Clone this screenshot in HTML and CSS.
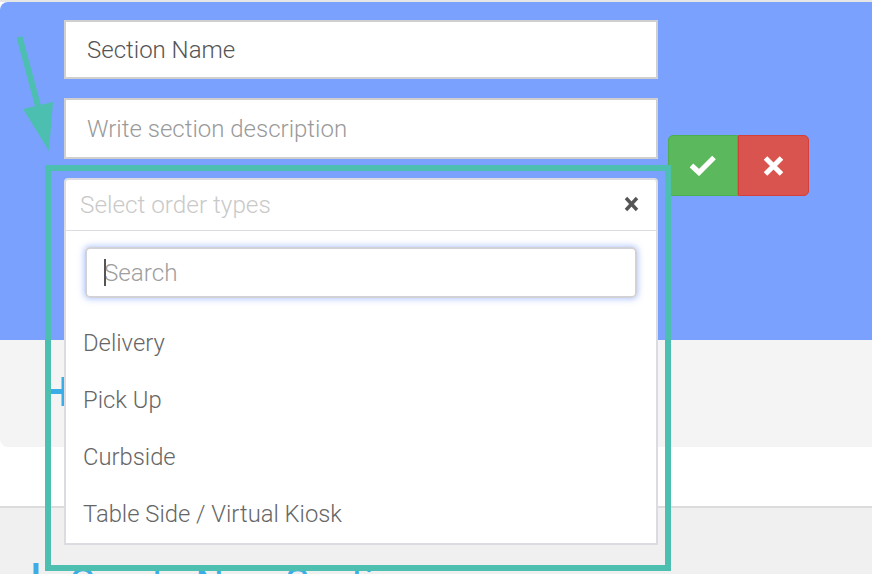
FILE: index.html
```html
<!DOCTYPE html>
<html lang="en">
<head>
<meta charset="utf-8">
<title>Section editor</title>
<link rel="stylesheet" href="styles.css">
</head>
<body>
  <div class="panel">
    <div class="card">
      <div class="card-head">
        <div class="form-col">
          <input class="field field-name" type="text" value="Section Name">
          <input class="field field-desc" type="text" placeholder="Write section description">
          <div class="select">
            <div class="select-head">
              <span class="select-ph">Select order types</span>
              <svg class="select-clear" width="15" height="16" viewBox="0 0 15 16"><path d="M2 2 L13 14 M13 2 L2 14" stroke="#555" stroke-width="3.4" fill="none"/></svg>
            </div>
            <div class="dropdown">
              <div class="search"><span class="caret"></span><span class="search-ph">Search</span></div>
              <ul class="options">
                <li class="option">Delivery</li>
                <li class="option">Pick Up</li>
                <li class="option">Curbside</li>
                <li class="option">Table Side / Virtual Kiosk</li>
              </ul>
            </div>
          </div>
        </div>
        <div class="actions">
          <button class="btn btn-ok" type="button">
            <svg width="26" height="21" viewBox="0 0 26 21"><polyline points="1.5,10.5 9,17.5 24,2.5" stroke="#fff" stroke-width="5.2" fill="none" stroke-linejoin="miter"/></svg>
          </button>
          <button class="btn btn-cancel" type="button">
            <svg width="21" height="20" viewBox="0 0 21 20"><path d="M2.5 2 L18.5 18 M18.5 2 L2.5 18" stroke="#fff" stroke-width="5" fill="none"/></svg>
          </button>
        </div>
      </div>
      <div class="card-body">
        <svg class="plus-small" width="28" height="29" viewBox="0 0 28 29"><path d="M14 0 V29 M0 14.5 H28" stroke="#3aace6" stroke-width="5" fill="none"/></svg>
      </div>
    </div>
  </div>
  <div class="create">
    <svg class="plus-big" width="28" height="28" viewBox="0 0 28 28"><path d="M14 0 V28 M0 14 H28" stroke="#3aace6" stroke-width="5" fill="none"/></svg>
    <span class="create-text">Create New Section</span>
  </div>

  <div class="annot-box"></div>
  <svg class="annot-arrow" width="60" height="160" viewBox="0 0 60 160">
    <line x1="19.5" y1="37" x2="38" y2="106" stroke="#4dbfb0" stroke-width="6"/>
    <polygon points="23,109 53,102 49,151" fill="#4dbfb0"/>
  </svg>
</body>
</html>
```
FILE: styles.css
```css
* { box-sizing: border-box; }
html, body { margin: 0; padding: 0; }
body {
  background: #f0f0f0;
  font-family: Roboto, "Liberation Sans", Arial, sans-serif;
  font-weight: 300;
  width: 872px;
  height: 574px;
  overflow: hidden;
  position: relative;
}
.panel {
  background: #fff;
  border-top: 2px solid #e6e6e6;
  padding-bottom: 59px;
  box-shadow: 0 2px 0 #dcdcdc;
}
.card {
  border-radius: 8px 0 0 8px;
  overflow: visible;
}
.card-head {
  background: #7ba1fe;
  border-top-left-radius: 8px;
  height: 338px;
  padding: 18px 0 0 64px;
  display: flex;
  align-items: flex-start;
}
.form-col {
  width: 594px;
  display: flex;
  flex-direction: column;
}
.field {
  display: block;
  width: 100%;
  margin: 0;
  border: 2px solid #cfcfcf;
  border-radius: 0;
  background: #fff;
  padding: 0 0 0 21px;
  font-family: inherit;
  font-weight: 300;
  font-size: 24px;
  color: #555;
  outline: none;
}
.field-name { height: 59px; }
.field-desc { height: 61px; margin-top: 19px; }
.field::placeholder { color: #9a9a9a; opacity: 1; }

.select {
  position: relative;
  margin-top: 19px;
}
.select-head {
  height: 53px;
  background: #fff;
  border: 2px solid #dcdce0;
  border-bottom-width: 1px;
  border-radius: 4px 4px 0 0;
  display: flex;
  align-items: center;
  justify-content: space-between;
  padding: 0 17px 0 14px;
}
.select-ph {
  font-size: 24.3px;
  line-height: 47px;
  color: #c9c9c9;
  margin-top: -2px;
}
.select-clear { display: block; margin-top: -2px; }

.dropdown {
  position: absolute;
  z-index: 2;
  top: 100%;
  left: 0;
  right: 0;
  background: #fff;
  border: 2px solid #dcdce0;
  border-top: 0;
  padding-top: 16px;
}
.search {
  margin: 0 19px;
  height: 51px;
  border: 2px solid #d2d2d6;
  border-radius: 5px;
  box-shadow: 0 0 6px 1px rgba(110, 150, 255, 0.55);
  display: flex;
  align-items: center;
  padding-left: 17px;
}
.caret {
  display: block;
  width: 2px;
  height: 27px;
  background: #555;
  margin-right: -2px;
  position: relative;
  z-index: 1;
}
.search-ph {
  font-size: 24.2px;
  color: #9e9e9e;
}
.options {
  list-style: none;
  margin: 17px 0 0;
  padding: 0;
}
.option {
  height: 57px;
  line-height: 57px;
  padding-left: 17px;
  font-size: 23.8px;
  color: #666;
}

.actions {
  display: flex;
  margin-left: 10px;
  margin-top: 115px;
}
.btn {
  width: 70px;
  height: 61px;
  display: flex;
  align-items: center;
  justify-content: center;
  padding: 0;
  margin: 0;
  cursor: pointer;
}
.btn svg { display: block; }
.btn-ok {
  background: #5cb85c;
  border: 1px solid #4cae4c;
  border-radius: 5px 0 0 5px;
}
.btn-cancel {
  width: 71px;
  background: #d9534f;
  border: 1px solid #d43f3a;
  border-radius: 0 5px 5px 0;
}

.card-body {
  background: #f4f4f4;
  height: 107px;
  border-bottom-left-radius: 8px;
  padding: 37px 0 0 50px;
}
.plus-small { display: block; }

.create {
  display: flex;
  align-items: flex-start;
  margin-top: 57px;
  padding-left: 22px;
  color: #3aace6;
}
.plus-big { display: block; flex: none; }
.create-text {
  margin-left: 19px;
  font-size: 40px;
  font-weight: 400;
  line-height: 40px;
  margin-top: 1px;
}

.annot-box {
  position: absolute;
  left: 45px;
  top: 165px;
  width: 626px;
  height: 406px;
  border: 6px solid #4dbfb0;
  z-index: 5;
  pointer-events: none;
}
.annot-arrow {
  position: absolute;
  left: 0;
  top: 0;
  z-index: 5;
}
```
